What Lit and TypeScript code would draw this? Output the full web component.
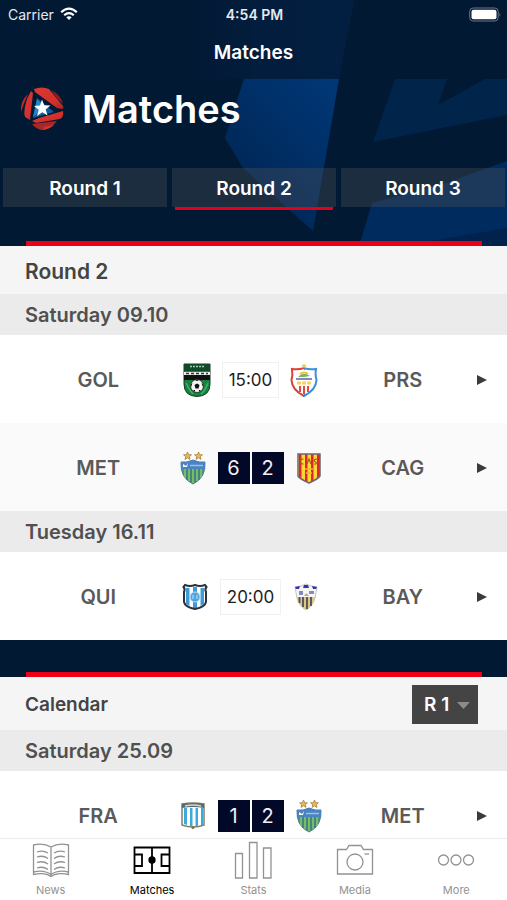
import { LitElement, html, svg, css, nothing, type TemplateResult } from "lit";
import { customElement, property, state } from "lit/decorators.js";
import { classMap } from "lit/directives/class-map.js";

type Match = {
  home: string;
  away: string;
  time?: string;
  score?: [number, number];
  alt?: boolean;
};

const STAR = "M0 -4 L1.2 -1.3 4 -1.2 1.8 .6 2.5 3.4 0 1.8 -2.5 3.4 -1.8 .6 -4 -1.2 -1.2 -1.3Z";

const crests: Record<string, TemplateResult> = {
  GOL: svg`
    <path d="M2 1H28V21Q28 33 15 33.500Q2 33 2 21Z" fill="#14843f" stroke="#1c3a28" stroke-width="1"/>
    <path d="M2 1H28V8H2Z" fill="#0f4a29"/>
    <path d="M8 3.500H22" stroke="#a9cdb5" stroke-width="1.500" stroke-dasharray="2 1"/>
    <path d="M2 9H28V12H2Z" fill="#e9eee9"/>
    <path d="M4 10.500H26" stroke="#333" stroke-width="1.500" stroke-dasharray="3 2"/>
    <path d="M2 12H28V17H2Z" fill="#111"/>
    <path d="M4 20Q8 28 11 31M26 20Q23 28 19 31" stroke="#3eb564" fill="none" stroke-width="1.500"/>
    <circle cx="15" cy="23" r="6.500" fill="#f5f5f5" stroke="#222" stroke-width=".8"/>
    <path d="M15 20.500L17.500 22 16.500 25.500H13.500L12.500 22ZM13 17L15 18 17 17ZM9 21L10.500 20 9 24ZM21 21L19.500 20 21 24ZM11 27L13 27 13 29ZM19 27L17 27 17 29Z" fill="#111"/>`,
  PRS: svg`
    <path d="M15 5Q20 7 27 6Q26 12 27.500 17Q27 27 15 33Z" fill="#fff" stroke="#3c8fd8" stroke-width="2"/>
    <path d="M15 5Q10 7 3 6Q4 12 2.500 17Q3 27 15 33" fill="#fff" stroke="#dc4038" stroke-width="2"/>
    <path d="M14 7H16V31H14Z" fill="#fff"/>
    <path d="M9 14Q14 8 21 13L15 14Z" fill="#7bb661"/>
    <path d="M11 11Q15 8 19 11" fill="none" stroke="#f1c232" stroke-width="2"/>
    <path d="M7 16H23" stroke="#8a84c4" stroke-width="2"/>
    <path d="M8 20H23" stroke="#f3d45c" stroke-width="3" stroke-dasharray="4 1"/>
    <path d="M11 23V29M15 23V31M19 23V29" stroke="#df4c42" stroke-width="2"/>
    <path d=${STAR} transform="translate(15 3) scale(.7)" fill="#f3c846"/>`,
  MET: svg`
    <path d="M3 11Q9 12 15 9Q21 12 27 11Q28 27 15 33Q2 27 3 11Z" fill="#4c9a68" stroke="#5276a6" stroke-width="1"/>
    <path d="M7 18V27M11 18V30M15 18V32M19 18V30M23 18V27" stroke="#86c866" stroke-width="1.500"/>
    <path d="M9 18V29M13 18V31M17 18V31M21 18V29" stroke="#3c7192" stroke-width="1"/>
    <path d="M3 11Q9 12 15 9Q21 12 27 11L27 18H3Z" fill="#4a83c4"/>
    <path d="M5 13L8 15 10 12 9 16H5Z" fill="#fff"/>
    <path d="M12 14.500H25" stroke="#9fc0e2" stroke-width="1.500"/>
    <path d=${STAR} transform="translate(9.500 5)" fill="#eeb84e" stroke="#997538" stroke-width=".7"/>
    <path d=${STAR} transform="translate(20.500 5)" fill="#eeb84e" stroke="#997538" stroke-width=".7"/>`,
  CAG: svg`
    <path d="M4 3H26V25Q24 28 15 32Q6 28 4 25Z" fill="#f9d832"/>
    <path d="M5 3H7.500V27L5 26ZM11 3H13.500V31L11 30ZM17 3H19.500V30L17 31ZM23 3H26V25L23 28Z" fill="#e0262c"/>
    <path d="M9.500 8Q6 8 6 10.500Q6 13 9.500 13M13 13L15 8 17 13M23 8Q19.500 8 20.500 10.500Q23 11 22 13H20" fill="none" stroke="#a35a25" stroke-width="1.200"/>
    <path d="M11 18H19M12 22H18" stroke="#f4b52a" stroke-width="1.500"/>
    <path d="M4 3H26V25Q24 28 15 32Q6 28 4 25Z" fill="none" stroke="#6d6672" stroke-width="1.500"/>`,
  QUI: svg`
    <path d="M5 6Q10 7 15 5Q20 7 25 6Q24 9 26 12V22Q25 27 15 29Q5 27 4 22V12Q6 9 5 6Z" fill="#fff"/>
    <path d="M6 8H9.500V26L6 24ZM13 7H17V28H13ZM20.500 8H24V24L20.500 26Z" fill="#3f9bd8"/>
    <circle cx="15" cy="17" r="5" fill="#4fa5de" stroke="#b8dcf2" stroke-width="1"/>
    <path d="M13 15V19M17 15V19" stroke="#c4e2f5" stroke-width="1"/>
    <path d="M5 5Q10 7 15 5Q20 7 25 5L26.500 7Q24.500 9 26 12V22Q25 27 15 29Q5 27 4 22V12Q5.500 9 3.500 7Z" fill="none" stroke="#28323b" stroke-width="2"/>`,
  BAY: svg`
    <path d="M4 7L10 6 15 4 20 6 26 7Q25 13 24 18Q22 26 15 30Q8 26 6 18Q5 13 4 7Z" fill="#f7f6f2" stroke="#b5b3ae" stroke-width=".8"/>
    <path d="M4 7L9 6 8 9 5 9ZM13 5H17L18 8H12ZM21 6L26 7 25 9H22Z" fill="#3034b5"/>
    <path d="M8 11H12V15H8ZM18 11H23V14H18Z" fill="#8688c8"/>
    <path d="M13 16Q15 11 18 16" fill="#b9aa8d"/>
    <path d="M6 17H24Q22 26 15 30Q8 26 6 17Z" fill="#dcc878"/>
    <path d="M8.500 17V23M12 17V27M16 17V29M20 17V26" stroke="#4a4d66" stroke-width="1.800"/>`,
  FRA: svg`
    <path d="M4 5Q15 3 26 5V26Q21 28 15 28Q9 28 4 26Z" fill="#fff" stroke="#85806a" stroke-width="1.500"/>
    <path d="M6 9H9V26L6 25ZM12 9H14.500V27H12ZM17.500 9H20V27H17.500ZM23 9H25V26L23 26Z" fill="#3ea9de"/>
    <path d="M4 5Q15 3 26 5V9Q15 7 4 9Z" fill="#5a6a70"/>
    <path d="M7 7Q15 5 23 7" stroke="#d5d6d0" stroke-width="1.500" fill="none"/>
    <circle cx="15" cy="28.500" r="1.500" fill="#7d7244"/>`,
};

@customElement("match-row")
class MatchRow extends LitElement {
  @property({ attribute: false }) match!: Match;

  static styles = css`
    :host { display: block; }
    .row {
      display: grid;
      grid-template-columns: 1fr 160px 1fr 14px;
      align-items: center;
      height: 88px;
      padding: 1px 18px 0 26px;
      box-sizing: border-box;
      background: #fff;
      color: #5a5a5a;
      text-decoration: none;
    }
    .alt { background: #fafafa; }
    .team { text-align: center; font-size: 20px; font-weight: 600; }
    .centre { display: flex; align-items: center; justify-content: center; gap: 10px; }
    .crest { width: 30px; height: 34px; flex: none; }
    .time {
      box-sizing: border-box;
      height: 36px;
      padding: 0 6px;
      border: 1px solid #f1f1f1;
      font-size: 17px;
      line-height: 34px;
      color: #1c1c1c;
    }
    .score { display: flex; gap: 2px; }
    .goals {
      width: 32px;
      height: 32px;
      background: #020828;
      color: #f1f1f4;
      font-size: 20px;
      line-height: 32px;
      text-align: center;
    }
    .arrow { width: 14px; height: 12px; fill: #3b3b3b; }
  `;

  private crest(team: string) {
    return html`<svg class="crest" viewBox="0 0 30 34" role="img" aria-label=${team}>${crests[team]}</svg>`;
  }

  render() {
    const { home, away, time, score, alt } = this.match;
    return html`
      <a href="#match" class=${classMap({ row: true, alt: !!alt })}>
        <span class="team">${home}</span>
        <span class="centre">
          ${this.crest(home)}
          ${score
            ? html`<span class="score"><span class="goals">${score[0]}</span><span class="goals">${score[1]}</span></span>`
            : html`<time class="time">${time}</time>`}
          ${this.crest(away)}
        </span>
        <span class="team">${away}</span>
        <svg class="arrow" viewBox="0 0 14 12" aria-hidden="true"><path d="M2 1L12 6 2 11Z"/></svg>
      </a>
    `;
  }
}

const tabs: { label: string; icon: TemplateResult }[] = [
  {
    label: "News",
    icon: svg`<path d="M20 6C15 3 8 2.500 2.500 4V31C8 29.500 15 30 20 33.500C25 30 32 29.500 37.500 31V4C32 2.500 25 3 20 6ZM20 6V35.500M2.500 31V33.500C8 32 16 32 20 35.500C24 32 32 32 37.500 33.500V31M6 11Q12 9 17 12M6 16Q12 14 17 17.500M6 21.500Q12 19.500 17 23M6 27Q12 25 17 28.500M34 11Q28 9 23 12M34 16Q28 14 23 17.500M34 21.500Q28 19.500 23 23M34 27Q28 25 23 28.500"/>`,
  },
  {
    label: "Matches",
    icon: svg`<path d="M2.500 6.500H37.500V32H2.500ZM20 6.500V32M2.500 13.500H10V25H2.500M37.500 13.500H29.500V25H37.500" stroke-width="1.800"/><circle cx="20" cy="19" r="3" fill="currentColor"/>`,
  },
  {
    label: "Stats",
    icon: svg`<path d="M2.500 12.500H9.500V37H2.500ZM16.500 1.500H24V37H16.500ZM30.500 7H38V37H30.500Z"/>`,
  },
  {
    label: "Media",
    icon: svg`<path d="M2.500 8.500H11.500L14 4.500H26L28.500 8.500H37.500V33H2.500Z"/><circle cx="20" cy="21" r="8"/><path d="M29.500 13H34"/>`,
  },
  {
    label: "More",
    icon: svg`<circle cx="7.500" cy="19" r="5"/><circle cx="20" cy="19" r="5"/><circle cx="32.500" cy="19" r="5"/>`,
  },
];

@customElement("app-root")
class AppRoot extends LitElement {
  @state() private round = 2;

  static styles = css`
    :host {
      display: flex;
      flex-direction: column;
      height: 100vh;
      overflow: hidden;
      background: #fff;
      font-family: Inter, "Liberation Sans", sans-serif;
      color: #444;
    }
    .content { flex: 1; min-height: 0; overflow: hidden; }
    .hero { position: relative; background: #021934; color: #fff; }
    .backdrop { position: absolute; inset: 0; width: 100%; height: 100%; }
    .front { position: relative; }
    .nav { height: 79px; }
    .status {
      display: grid;
      grid-template-columns: 1fr auto 1fr;
      align-items: center;
      height: 28px;
      padding: 0 6px 0 8px;
      font-size: 14px;
      color: #e4e9ef;
    }
    .carrier { display: flex; align-items: center; gap: 6px; }
    .clock { font-weight: 600; }
    .wifi { width: 18px; height: 14px; }
    .battery { width: 32px; height: 15px; justify-self: end; }
    .bar-title { text-align: center; font-size: 19px; font-weight: 600; line-height: 49px; }
    .brand { display: flex; align-items: center; gap: 16px; height: 60px; padding: 0 20px; }
    .logo { width: 46px; height: 46px; }
    .page-title { margin: 0; font-size: 38px; font-weight: 600; }
    .rounds { display: grid; grid-template-columns: repeat(3, 1fr); gap: 5px; padding: 29px 2px 0 3px; }
    .round {
      position: relative;
      height: 39px;
      padding: 1px 0 0;
      border: 0;
      background: rgba(80, 84, 90, 0.35);
      color: #fff;
      font: 600 19px Inter, "Liberation Sans", sans-serif;
    }
    .active::after {
      content: "";
      position: absolute;
      left: 3px;
      right: 3px;
      bottom: -3px;
      height: 3px;
      background: #e2001a;
    }
    .rule { height: 5px; margin: 0 25px 0 26px; background: #eb0015; }
    .rounds + .rule { margin-top: 34px; }
    .divider { padding-top: 32px; background: #021934; }
    .heading {
      display: flex;
      align-items: center;
      justify-content: space-between;
      box-sizing: border-box;
      height: 48px;
      padding: 2px 29px 0 25px;
      background: #f5f5f5;
    }
    .tall { height: 53px; padding-top: 1px; }
    .title { margin: 0; font-size: 21px; font-weight: 600; }
    .tall .title { font-size: 19px; }
    .date {
      margin: 0;
      padding: 2px 25px 0;
      background: #ebebeb;
      color: #505050;
      font-size: 20px;
      font-weight: 600;
      line-height: 39px;
      letter-spacing: normal;
    }
    .picker { position: relative; }
    .select {
      display: block;
      appearance: none;
      width: 66px;
      height: 39px;
      padding: 0 0 0 12px;
      border: 0;
      border-radius: 0;
      background: #444;
      color: #fff;
      font: 600 19px Inter, "Liberation Sans", sans-serif;
    }
    .caret {
      position: absolute;
      right: 8px;
      top: 17px;
      width: 13px;
      height: 7px;
      fill: #8c8c8c;
      pointer-events: none;
    }
    .tabbar {
      display: grid;
      grid-template-columns: repeat(5, 1fr);
      flex: none;
      height: 62px;
      box-sizing: border-box;
      border-top: 1px solid #ececec;
      background: #fff;
    }
    .tab {
      display: flex;
      flex-direction: column;
      align-items: center;
      gap: 4px;
      padding-top: 2px;
      color: #929292;
      font-size: 11px;
      line-height: 14px;
      text-decoration: none;
    }
    .current { color: #000; }
    .icon { width: 40px; height: 38px; fill: none; stroke: currentColor; stroke-width: 1.3; }
  `;

  private renderMatches(matches: Match[]) {
    return matches.map((m) => html`<match-row .match=${m}></match-row>`);
  }

  private renderLogo() {
    return html`
      <svg class="logo" viewBox="0 0 46 46" aria-hidden="true">
        <defs>
          <linearGradient id="red" x1="0" y1="0" x2="1" y2="1">
            <stop offset="0" stop-color="#dc3a33" /><stop offset=".7" stop-color="#d22f2c" /><stop offset="1" stop-color="#a82326" />
          </linearGradient>
        </defs>
        <path d="M14 3Q22 0 29 3L43 20Q44 23 42 23L37 22L15 6Z" fill="url(#red)" />
        <path d="M31 4Q41 9 43 18L36 11Z" fill="#8a201f" />
        <path d="M11 5L13 7 10 34 5 31Q3 26 7 13Z" fill="url(#red)" />
        <path d="M8 8Q0 15 1 26L5 15Z" fill="#b92a27" />
        <path d="M43 25Q44 31 40 33L16 37 12 35 19 32Z" fill="url(#red)" />
        <path d="M12 38L37 35Q31 43 23 44Q17 44 12 38Z" fill="#a92726" />
        <path d="M24 41L34 39Q30 43 23 44Z" fill="#d5332f" />
        <path d="M17 12L34 26 13 32Z" fill="#0e5a9e" />
        <path d="M17 13L21 17 19 26 13 31Z" fill="#2484c6" />
        <path d="M22 13.500L24.200 19.300 30.500 19.500 25.700 23.500 27.500 29.500 22.300 26.300 17 30 18.800 23.800 14 20 20 19.500Z" fill="#fff" />
      </svg>
    `;
  }

  render() {
    return html`
      <main class="content">
        <header class="hero">
          <svg class="backdrop" viewBox="0 0 507 246" preserveAspectRatio="none" aria-hidden="true">
            <defs>
              <linearGradient id="beam" x1="1" y1="0" x2=".2" y2="1">
                <stop offset="0" stop-color="#003878" /><stop offset=".5" stop-color="#002e64" /><stop offset="1" stop-color="#012350" />
              </linearGradient>
              <linearGradient id="haze">
                <stop offset="0" stop-color="#021934" /><stop offset=".4" stop-color="#021d3d" /><stop offset="1" stop-color="#021f42" />
              </linearGradient>
            </defs>
            <path d="M190 0H354L339 79H190Z" fill="url(#haze)" />
            <path d="M244 79H339L313 231 243 168 225 138Z" fill="url(#beam)" />
            <path d="M395 79L373 142 507 115V79H485L438 105 447 79Z" fill="#01244a" />
            <path d="M507 161L446 183 372 203 359 246H507Z" fill="#002b5e" />
            <path d="M507 228L430 241 428 246H507Z" fill="#01224c" />
          </svg>
          <div class="front">
            <div class="nav">
              <div class="status">
                <span class="carrier">Carrier
                  <svg class="wifi" viewBox="0 0 18 14" fill="none" stroke="#fff" stroke-width="2.2" aria-hidden="true">
                    <path d="M1.200 5.200Q9 -2 16.800 5.200M4.200 8.300Q9 4 13.800 8.300" /><path d="M6.300 10.300Q9 8.300 11.700 10.300L9 13Z" fill="#fff" stroke="none" />
                  </svg>
                </span>
                <span class="clock">4:54 PM</span>
                <svg class="battery" viewBox="0 0 32 15" aria-hidden="true">
                  <rect x=".7" y="1" width="28.500" height="13" rx="3.500" fill="none" stroke="#6b7888" />
                  <rect x="2.500" y="2.800" width="25" height="9.500" rx="2" fill="#fff" />
                  <path d="M30.500 5.500Q32 7.500 30.500 9.500Z" fill="#6b7888" />
                </svg>
              </div>
              <div class="bar-title">Matches</div>
            </div>
            <div class="brand">${this.renderLogo()}<h1 class="page-title">Matches</h1></div>
            <div class="rounds">
              ${[1, 2, 3].map(
                (n) => html`<button
                  type="button"
                  class=${classMap({ round: true, active: n === this.round })}
                  @click=${() => (this.round = n)}
                >Round ${n}</button>`
              )}
            </div>
            <div class="rule"></div>
          </div>
        </header>

        <section>
          <div class="heading"><h2 class="title">Round ${this.round}</h2></div>
          <h3 class="date">Saturday 09.10</h3>
          ${this.renderMatches([
            { home: "GOL", away: "PRS", time: "15:00" },
            { home: "MET", away: "CAG", score: [6, 2], alt: true },
          ])}
          <h3 class="date">Tuesday 16.11</h3>
          ${this.renderMatches([{ home: "QUI", away: "BAY", time: "20:00" }])}
        </section>

        <div class="divider"><div class="rule"></div></div>

        <section>
          <div class="heading tall">
            <h2 class="title">Calendar</h2>
            <div class="picker">
              <select class="select" aria-label="Calendar round">
                <option>R 1</option><option>R 2</option><option>R 3</option>
              </select>
              <svg class="caret" viewBox="0 0 13 7" aria-hidden="true"><path d="M0 0H13L6.500 7Z" /></svg>
            </div>
          </div>
          <h3 class="date">Saturday 25.09</h3>
          ${this.renderMatches([{ home: "FRA", away: "MET", score: [1, 2] }])}
        </section>
      </main>

      <nav class="tabbar">
        ${tabs.map(
          ({ label, icon }) => html`<a
            href="#${label.toLowerCase()}"
            class=${classMap({ tab: true, current: label === "Matches" })}
            aria-current=${label === "Matches" ? "page" : nothing}
          ><svg class="icon" viewBox="0 0 40 38" aria-hidden="true">${icon}</svg>${label}</a>`
        )}
      </nav>
    `;
  }
}
